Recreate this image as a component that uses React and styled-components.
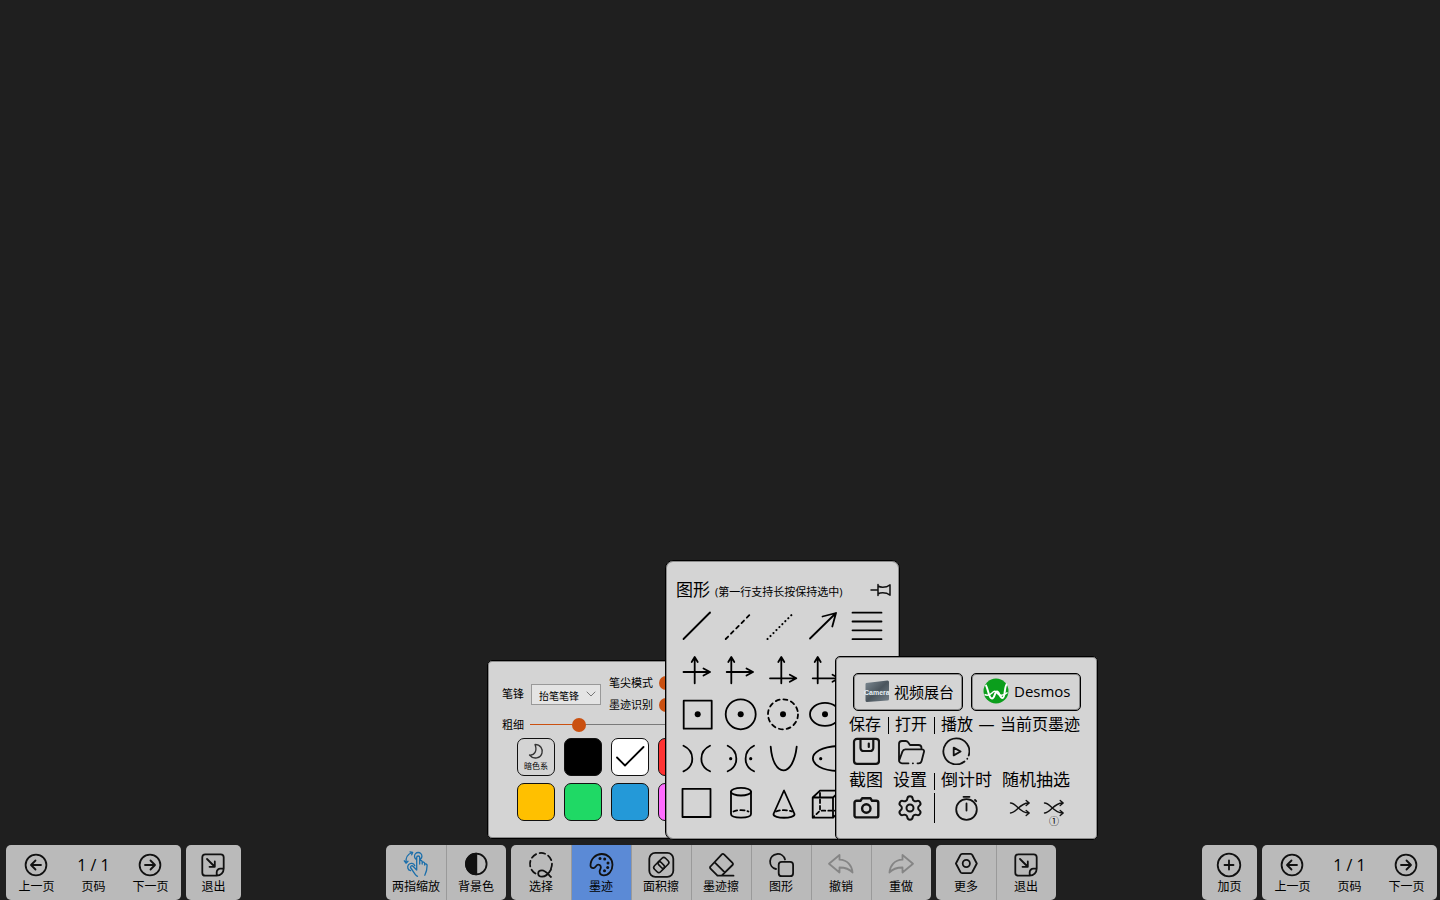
import React, { useState } from "react";
import styled, { createGlobalStyle } from "styled-components";
import { Settings } from "lucide-react";

const Global = createGlobalStyle`
  *, *::before, *::after { box-sizing: border-box; }
  body {
    margin: 0;
    background: #1f1f1f;
    color: #000;
    font-family: "Open Sans", "Noto Sans CJK SC", sans-serif;
  }
  button, select, input { font: inherit; color: inherit; }
`;

const Board = styled.main`
  min-height: 100vh;
  display: flex;
  flex-direction: column;
  justify-content: flex-end;
  overflow: hidden;
`;

const BottomBar = styled.footer`
  display: grid;
  grid-template-columns: 1fr auto 1fr;
  padding: 0 3px 0 5px;
`;

const Side = styled.div`
  display: flex;
  gap: 5px;
  padding-left: 1px;
  justify-content: ${(p) => p.$align};
`;

const Center = styled.div`
  position: relative;
  display: flex;
  gap: 5px;
`;

const Group = styled.nav`
  display: flex;
  height: 55px;
  padding: 0 ${(p) => p.$pad || 0}px;
  border-radius: 5px;
  background: #bababa;
  overflow: hidden;
`;

const ToolButton = styled.button`
  width: ${(p) => p.$width || 60}px;
  padding: 6px 0 0;
  border: 0;
  box-shadow: ${(p) => (p.$divided ? "inset 1px 0 #9a9a9a" : "none")};
  background: ${(p) => (p.$active ? "#5b8ad6" : "transparent")};
  display: flex;
  flex-direction: column;
  align-items: center;
  font-size: 12px;
  line-height: 16px;
  white-space: nowrap;
  cursor: pointer;
`;

const PageCount = styled.div`
  width: 57px;
  padding-top: 6px;
  display: flex;
  flex-direction: column;
  align-items: center;
  font-size: 12px;
  line-height: 16px;

  strong {
    font-size: 16px;
    font-weight: 400;
    line-height: 28px;
  }
`;

const Icon = styled.svg.attrs({ "aria-hidden": true })`
  display: block;
  flex: none;
  fill: none;
  stroke: ${(p) => p.$color || "#111"};
  stroke-width: ${(p) => p.$weight || 1.8};
  stroke-linecap: round;
  stroke-linejoin: round;
`;

const Popup = styled.section`
  position: absolute;
  left: ${(p) => p.$left}px;
  bottom: ${(p) => p.$bottom}px;
  width: ${(p) => p.$width}px;
  padding: ${(p) => p.$padding};
  border: 1px solid #000;
  border-radius: ${(p) => p.$radius || 5}px;
  background: #d4d4d4;
  box-shadow: inset 0 0 0 1px rgba(0, 0, 0, 0.35);
`;

/* Pen panel */
const PenOptions = styled.div`
  display: flex;
  align-items: center;
  height: 44px;
  font-size: 11px;
  line-height: 22px;
`;

const TipLabel = styled.label`
  width: 29px;
  flex: none;
`;

const SelectBox = styled.span`
  display: grid;
  align-items: center;
  width: 70px;
  margin-right: 8px;

  select, svg { grid-area: 1 / 1; }
  svg { justify-self: end; margin-right: 5px; pointer-events: none; }
`;

const TipSelect = styled.select`
  appearance: none;
  width: 100%;
  height: 21px;
  padding: 0 0 3px 7px;
  border: 1px solid #999;
  border-radius: 0;
  background: #e4e4e4;
  font-size: 10px;
`;

const ToggleRow = styled.label`
  display: flex;
  align-items: center;
  gap: 6px;
  height: 22px;
`;

const Toggle = styled.input.attrs({ type: "checkbox" })`
  appearance: none;
  width: 30px;
  height: 14px;
  margin: 0;
  border-radius: 7px;
  background: #ca5010;
`;

const WidthRow = styled.label`
  display: flex;
  align-items: center;
  height: 17px;
  font-size: 11px;
  line-height: 17px;
`;

const WidthText = styled.span`
  width: 28px;
  flex: none;
`;

const WidthSlider = styled.input.attrs({ type: "range" })`
  appearance: none;
  flex: 1;
  min-width: 0;
  height: 14px;
  margin: 0;
  background: linear-gradient(#ca5010, #ca5010) 0 50% / 49px 1px no-repeat,
    linear-gradient(#7a7a7a, #7a7a7a) 0 50% / 100% 1px no-repeat;

  &::-webkit-slider-thumb {
    appearance: none;
    width: 14px;
    height: 14px;
    border-radius: 50%;
    background: #ca5010;
  }
`;

const Swatches = styled.div`
  display: grid;
  grid-template-columns: repeat(6, 38px);
  gap: 7px 9px;
  margin: 5px 0 0 15px;
`;

const Swatch = styled.button`
  height: 38px;
  padding: 0;
  border: 1px solid #111;
  border-radius: 7px;
  background: ${(p) => p.$color};
  display: flex;
  flex-direction: column;
  align-items: center;
  justify-content: center;
  font-size: 8px;
  line-height: 10px;
`;

/* Shapes panel */
const ShapesHeader = styled.header`
  display: flex;
  align-items: center;
  height: 28px;

  h2 { margin: 0 5px 0 0; font-size: 17px; font-weight: 400; line-height: 28px; }
  small { font-size: 11px; line-height: 24px; padding-top: 4px; white-space: nowrap; }
`;

const PinButton = styled.button`
  margin-left: auto;
  padding: 0;
  border: 0;
  background: none;
`;

const ShapeGrid = styled.div`
  display: grid;
  grid-template-columns: repeat(5, 42px);
  grid-auto-rows: 44px;
`;

const PlainButton = styled.button`
  padding: 0;
  border: 0;
  background: none;
  cursor: pointer;
`;

/* More panel */
const AppRow = styled.div`
  display: flex;
  gap: 8px;
  padding-left: 4px;
`;

const AppButton = styled.button`
  display: flex;
  align-items: center;
  gap: 4px;
  width: 110px;
  height: 38px;
  padding: 0 0 2px 9px;
  border: 1px solid #000;
  border-radius: 5px;
  background: transparent;
  box-shadow: inset 0 0 0 1px rgba(0, 0, 0, 0.35);
  font-size: 15px;
  white-space: nowrap;
`;

const Caption = styled.div`
  display: flex;
  align-items: center;
  justify-content: ${(p) => (p.$spread ? "space-between" : "flex-start")};
  gap: ${(p) => (p.$spread ? 0 : 10)}px;
  width: 231px;
  height: ${(p) => p.$height}px;
  font-size: ${(p) => p.$size}px;
  line-height: ${(p) => p.$height}px;
  white-space: nowrap;
`;

const Bar = styled.i`
  display: inline-block;
  width: 1px;
  height: 17px;
  margin: 0 6px 0 7px;
  background: #000;
  vertical-align: middle;
`;

const TallBar = styled(Bar)`
  height: 30px;
  margin: 0 2px 0 -6px;
`;

const ActionRow = styled.div`
  display: flex;
  align-items: center;
  gap: ${(p) => p.$gap}px;
  height: 28px;
  padding-left: 3px;
`;

const Shuffles = styled.div`
  display: flex;
  gap: 6px;
  margin-left: 9px;
`;

const ShuffleButton = styled(PlainButton)`
  position: relative;

  span {
    position: absolute;
    left: 0;
    right: 0;
    top: 20px;
    font-size: 10px;
    line-height: 14px;
  }
`;

const glyphs = {
  prev: <><circle cx="14" cy="14" r="10.4" /><path d="M19 14H9.500M13.500 9.500L9 14l4.500 4.500" /></>,
  next: <><circle cx="14" cy="14" r="10.400" /><path d="M9 14h9.500M14.500 9.500L19 14l-4.500 4.500" /></>,
  add: <><circle cx="14" cy="14" r="11.300" /><path d="M14 9.500v9M9.500 14h9" /></>,
  exit: <><path d="M24.700 17.500V6.300a3 3 0 0 0-3-3H6.300a3 3 0 0 0-3 3v15.400a3 3 0 0 0 3 3h11.400l0-3.400a3.600 3.600 0 0 1 3.600-3.600h3.200M24.700 17.500c0 4-3 7.200-7 7.200M8 8l7.500 7.500M15.800 10.500v5.300h-5.300" /></>,
  gesture: <><path d="M4 12C3.500 7 6 3 10 1.500M8 .8l2.700.5-1 2.500M2.300 9.800L4 12.200l2-2M14.700 19V6.500a1.500 1.500 0 0 1 3 0V13M17.700 9.800c1.200-.9 2.500 0 2.500 1.200V13M20.200 11.300c1.200-.7 2.500.1 2.500 1.300V14M22.700 13c1.300-.5 2.400.3 2.400 1.600 0 4-.3 6-2.300 9.700M13.800 8A3.700 3.700 0 1 1 18.600 8M14.700 19L11 15.200c-1.400-1.200-3.200.4-2.200 1.800l4.400 6.300c.6.9 1.300 1.500 2.300 2M8.500 19.700a3.700 3.700 0 1 1 4.300-5" /></>,
  contrast: <><circle cx="14.300" cy="13" r="10.300" /><path d="M14.300 2.700a10.300 10.300 0 0 0 0 20.600z" fill="#111" /></>,
  select: <><path d="M8.500 22.500A11 11 0 1 1 24 17.500" strokeDasharray="5.500 3.600" /><path d="M24 18.500c-2.500 4.500-6 7.200-9 7.200-2.300 0-3.800-1.200-3.800-3.200S12.800 19.300 15 19.300c3.600 0 6 4 9 6.700" /></>,
  palette: <><path d="M3.500 14.500C3.500 8 8.500 3 14.800 3c6 0 10.700 5 10.700 10.800 0 6-4 10.500-8.700 10.500-4.300 0-5-3.500-3.500-6 1.300-2.300.2-4.600-2-4.600-2.300 0-2.300 3-4.600 3.300-2 .2-3.200-.8-3.200-2.500z" />{[[13, 7.500], [17.700, 8], [21, 12], [20.700, 16.500], [17.500, 19.800]].map(([x, y]) => <circle key={x} cx={x} cy={y} r="1.500" fill="#111" stroke="none" />)}</>,
  areaEraser: <><rect x="2.300" y="1.800" width="24" height="24" rx="6" /><g transform="rotate(-45 14.300 14)" strokeWidth="1.600"><rect x="6.500" y="9.700" width="9.500" height="8.600" rx="2.500" /><rect x="12.600" y="9.700" width="9.500" height="8.600" rx="2.500" /></g></>,
  inkEraser: <path d="M14.800 3.300a1.500 1.500 0 0 1 2.200 0l8.500 8.500a1.500 1.500 0 0 1 0 2.200L14.700 24.700H10.500l-7-7a1.500 1.500 0 0 1 0-2.200zM7.700 11.300l10 10M10.500 24.700h16" />,
  shapes: <><path d="M9 18A7.600 7.600 0 1 1 18 8.500" /><rect x="11.700" y="10.800" width="14.400" height="14.400" rx="3" /></>,
  redo: <path d="M2.500 21.500c.5-7 5-12.500 13-12.800V4l10.500 8.700-10.500 8.800v-5c-6 0-10 1.500-13 5z" />,
  undo: <path d="M25.500 21.500c-.5-7-5-12.500-13-12.800V4L2 12.700l10.500 8.800v-5c6 0 10 1.500 13 5z" />,
  more: <><path d="M3.900 12.500L8.400 4a2 2 0 0 1 1.800-1.200h8.300A2 2 0 0 1 20.300 4l4.500 8.500-4.500 8.500a2 2 0 0 1-1.800 1.200h-8.300A2 2 0 0 1 8.400 21z" /><circle cx="14.300" cy="12.500" r="3.600" /></>,
  save: <><rect x="2" y="1.800" width="25" height="25" rx="3" /><path d="M8.500 2v9a3 3 0 0 0 3 3h6.800a3 3 0 0 0 3-3V2M16.800 6.500v3.500" /></>,
  folder: <><path d="M6.500 26.300h-1.500A3 3 0 0 1 2 23.300V7a3 3 0 0 1 3-3h3.800c1 0 1.700.4 2.300 1.200L13 8h8.500A3 3 0 0 1 24.500 11v1.200M2 24l3.500-9.600A3 3 0 0 1 8.300 12.300H25a2 2 0 0 1 2 2.500L24.600 24a3 3 0 0 1-2.900 2.300h-1.200M6.500 26.300h5M15.800 26.300h.2" /></>,
  play: <><path d="M22.500 24.500A13 13 0 1 1 26.700 18.500M25.300 21.700v.1" /><path d="M11.700 10.600v7.800l6.900-3.900z" /></>,
  camera: <><path d="M4.500 6.800H8.500L10.200 4.200h8.200L20 6.800h4.300a2 2 0 0 1 2 2v12.600a2 2 0 0 1-2 2H4.500a2 2 0 0 1-2-2V8.800a2 2 0 0 1 2-2z" /><circle cx="14.300" cy="14.500" r="4.200" /></>,
  timer: <><circle cx="13.500" cy="15.500" r="10.300" /><path d="M10.500 2.800h6M13.500 9.500v7M22 6l1.200 1.200" /></>,
  shuffle: <path d="M4.500 9c6 0 9 10 18 10M4.500 19c6 0 9-10 18-10M20.200 6.500L23.200 9l-3 2.500M20.200 16.500l3 2.500-3 2.500" />,
};

function Glyph({ name, width = 28, ...rest }) {
  return <Icon width={width} height="28" viewBox={`0 0 ${width} 28`} {...rest}>{glyphs[name]}</Icon>;
}

function Tool({ icon, label, color, weight, ...rest }) {
  return (
    <ToolButton type="button" {...rest}>
      <Glyph name={icon} width={rest.$width ? 29 : 28} $color={color} $weight={weight} />
      {label}
    </ToolButton>
  );
}

function Pager() {
  return (
    <Group $pad={2} aria-label="翻页">
      <Tool icon="prev" label="上一页" $width={57} />
      <PageCount><strong>1 / 1</strong>页码</PageCount>
      <Tool icon="next" label="下一页" $width={57} />
    </Group>
  );
}

const Dot = ({ x, y, r = 3 }) => <circle cx={x} cy={y} r={r} fill="#000" stroke="none" />;

const axes = (x, y, x1, x2) => (
  <path d={`M${x} 35.300V9.500M${x - 3} 14L${x} 9l3 5M${x1} ${y}H${x2}M${x2 - 6.500} ${y - 3.500}L${x2} ${y}l-6.500 3.500`} />
);

const shapes = [
  ["直线", <path d="M7.500 35L34 8.500" />],
  ["虚线", <path d="M7.700 35L34 8.500" strokeDasharray="3.500 4" />],
  ["点线", <path d="M7.500 35L34 8.500" strokeDasharray=".1 4.100" strokeWidth="2.100" />],
  ["箭头", <path d="M8 34.500L34 9M20.500 12.500L34 9l-3.700 13.500" />],
  ["平行线", <path d="M8.500 8.700h29M8.500 17.500h29M8.500 26.300h29M8.500 35.200h29" />],
  ["坐标系一", axes(18.7, 24, 7.5, 34)],
  ["坐标系二", axes(13.3, 24, 8.7, 35)],
  ["坐标系三", axes(21.3, 30.3, 10, 36.3)],
  ["坐标系四", axes(15.7, 30.3, 10.7, 37)],
  ["三维坐标系", <path d="M21 9.500V25h15M21 25L10 36" />],
  ["中心矩形", <><path d="M7.700 8.700h28v28h-28z" /><Dot x={21.7} y={22.3} /></>],
  ["圆", <><circle cx="22.700" cy="22.300" r="15" /><Dot x={22.7} y={22.3} /></>],
  ["虚线圆", <><circle cx="23" cy="22.300" r="15" strokeDasharray="4 3.850" /><Dot x={23} y={22.3} /></>],
  ["椭圆", <><ellipse cx="23" cy="22.300" rx="15" ry="11.500" /><Dot x={23} y={22.3} /></>],
  ["焦点椭圆", <ellipse cx="23" cy="22.300" rx="14" ry="10" />],
  ["双曲线", <path d="M7.500 9.700c11.700 5.500 11.700 20.500 0 25.600M34 9.700c-11.500 5.500-11.500 20.500 0 25.600" />],
  ["焦点双曲线", <><path d="M9.700 9.700c11.500 5.500 11.500 20.500 0 25.600M36 9.700c-11.200 5.500-11.200 20.500 0 25.600" /><Dot x={12.7} y={22.7} r={1.6} /><Dot x={32.7} y={22.7} r={1.6} /></>],
  ["抛物线", <path d="M10.700 10.700c2.500 31.500 22.500 31.500 26 0" />],
  ["焦点抛物线", <><path d="M36 10C2.500 11.500 2.500 33.500 36 35" /><Dot x={18.7} y={22.7} r={1.6} /></>],
  ["横抛物线", <path d="M36 10C2.500 11.500 2.500 33.500 36 35" />],
  ["矩形", <path d="M6.500 8.800h28V37h-28z" />],
  ["圆柱", <><ellipse cx="23" cy="11.700" rx="10" ry="3.800" /><path d="M13 11.700V34c0 4.700 20 4.700 20 0V11.700" /><path d="M15.500 31.500c4-1.800 11-1.800 15 0" strokeDasharray="4 3" /></>],
  ["圆锥", <><path d="M24 10.500L13.500 34c-.5 5 21.500 5 21 0z" /><path d="M16 31.500c4-1.800 12-1.800 16 0" strokeDasharray="4 3" /></>],
  ["长方体", <><path d="M10.700 17.500H31v20.200H10.700zM10.700 17.500L18 10.700h20.500L31 17.500M38.500 10.700v20L31 37.700" /><path d="M18 13v17.700h20M17 31.700l-6 5.600" strokeDasharray="3.500 3" /></>],
  ["球", <circle cx="23" cy="22.300" r="14" />],
];

const colors = ["#000000", "#ffffff", "#ff3333", "#8a4fd0", "#ffc000", "#1fd965", "#2499d8", "#ff6cff", "#14b8a6", "#f97316"];

function PenPanel() {
  const [thickness, setThickness] = useState(42);
  return (
    <Popup $left={101} $bottom={61} $width={340} $padding="11px 14px 17px" aria-label="墨迹">
      <PenOptions>
        <TipLabel htmlFor="tip">笔锋</TipLabel>
        <SelectBox>
          <TipSelect id="tip"><option>抬笔笔锋</option></TipSelect>
          <Icon width="10" height="6" viewBox="0 0 10 6" $color="#777" $weight={1}><path d="M1 1l4 4 4-4" /></Icon>
        </SelectBox>
        <div>
          <ToggleRow>笔尖模式<Toggle defaultChecked /></ToggleRow>
          <ToggleRow>墨迹识别<Toggle defaultChecked /></ToggleRow>
        </div>
      </PenOptions>
      <WidthRow>
        <WidthText>粗细</WidthText>
        <WidthSlider min="0" max="268" value={thickness} onChange={(e) => setThickness(+e.target.value)} />
      </WidthRow>
      <Swatches>
        <Swatch type="button" $color="transparent">
          <Icon width="18" height="18" viewBox="0 0 18 18" $weight={1.3} $color="#333">
            <path d="M8 1.500c5.500 0 8 4.500 7 8.500-1.200 5.200-8.500 7-12.500 2 5 .5 8-4 5.500-10.500z" />
          </Icon>
          暗色系
        </Swatch>
        {colors.map((color, i) => (
          <React.Fragment key={color}>
            <Swatch type="button" $color={color} aria-label={color} aria-pressed={color === "#ffffff"}
              style={i === 4 ? { gridColumn: 1 } : undefined}>
              {color === "#ffffff" && (
                <Icon width="36" height="36" viewBox="0 0 36 36" $color="#000"><path d="M5 18.500l8 8L31.500 8" /></Icon>
              )}
            </Swatch>
          </React.Fragment>
        ))}
      </Swatches>
    </Popup>
  );
}

function ShapesPanel() {
  return (
    <Popup $left={279} $bottom={60} $width={235} $radius={8} $padding="15px 7px 15px 10px" aria-label="图形">
      <ShapesHeader>
        <h2>图形</h2>
        <small>(第一行支持长按保持选中)</small>
        <PinButton type="button" aria-label="固定">
          <Icon width="22" height="14" viewBox="0 0 22 14" $weight={1.500}>
            <path d="M1 7h7M8 1.500v11M8 3c2 1.300 6 1.300 8.500.8L20 1.800v10.400l-3.500-2c-2.500-.5-6.500-.5-8.500.8" />
          </Icon>
        </PinButton>
      </ShapesHeader>
      <ShapeGrid>
        {shapes.map(([name, drawing]) => (
          <PlainButton key={name} type="button" aria-label={name}>
            <Icon width="42" height="44" viewBox="0 0 42 44" $color="#000">{drawing}</Icon>
          </PlainButton>
        ))}
      </ShapeGrid>
    </Popup>
  );
}

function MorePanel() {
  return (
    <Popup $left={449} $bottom={60} $width={263} $padding="16px 13px 17px" aria-label="更多">
      <AppRow>
        <AppButton type="button">
          <svg width="27" height="26" viewBox="0 0 27 26" aria-hidden="true">
            <defs>
              <linearGradient id="body" x1="0" y1="0" x2="1" y2="1">
                <stop offset="0" stopColor="#7d8a93" />
                <stop offset=".5" stopColor="#4b555d" />
                <stop offset="1" stopColor="#76828b" />
              </linearGradient>
            </defs>
            <path d="M3 5l21.500-2.500q1.500 0 1.500 1.500v17q0 1.500-1.500 1.500L4 24q-1.500 0-1.500-1.500V6z" fill="url(#body)" />
            <text x="1" y="17" fontSize="7" fontWeight="700" fontFamily="Liberation Sans, sans-serif" fill="#e8f0f6">Camera</text>
          </svg>
          视频展台
        </AppButton>
        <AppButton type="button">
          <svg width="29" height="26" viewBox="0 0 29 26" aria-hidden="true">
            <circle cx="15" cy="13" r="12.500" fill="#0b9e1c" />
            <path d="M4.500 7C7 9 7.500 20.500 11 20.500c3 0 2.500-7 5-7s2.500 6.500 5.500 6.500S23 8 26 6" fill="none" stroke="#fff" strokeWidth="2" />
            <path d="M3.500 16.500c3 1.500 5 1 7.500-1.500s3.500-2 5 0 5 4 10.500-.5" fill="none" stroke="#fff" strokeWidth="1.500" />
          </svg>
          Desmos
        </AppButton>
      </AppRow>
      <Caption $spread $size={16} $height={26}>
        <span>保存<Bar />打开<Bar />播放</span><span>—</span><span>当前页墨迹</span>
      </Caption>
      <ActionRow $gap={17}>
        <PlainButton type="button" aria-label="保存"><Glyph name="save" $weight={2.2} /></PlainButton>
        <PlainButton type="button" aria-label="打开"><Glyph name="folder" /></PlainButton>
        <PlainButton type="button" aria-label="播放"><Glyph name="play" /></PlainButton>
      </ActionRow>
      <Caption $size={17} $height={29}>
        <span>截图</span><span>设置<Bar />倒计时</span><span>随机抽选</span>
      </Caption>
      <ActionRow $gap={16}>
        <PlainButton type="button" aria-label="截图"><Glyph name="camera" $weight={2.4} /></PlainButton>
        <PlainButton type="button" aria-label="设置"><Settings size={28} strokeWidth={1.7} color="#111" style={{ display: "block" }} /></PlainButton>
        <TallBar />
        <PlainButton type="button" aria-label="倒计时"><Glyph name="timer" /></PlainButton>
        <Shuffles>
          <ShuffleButton type="button" aria-label="随机抽选"><Glyph name="shuffle" $weight={1.4} /></ShuffleButton>
          <ShuffleButton type="button" aria-label="单人抽选"><Glyph name="shuffle" $weight={1.4} /><span>①</span></ShuffleButton>
        </Shuffles>
      </ActionRow>
    </Popup>
  );
}

export default function App() {
  return (
    <>
      <Global />
      <Board>
        <BottomBar>
          <Side $align="flex-start">
            <Pager />
            <Group><Tool icon="exit" label="退出" $width={55} /></Group>
          </Side>
          <Center>
            <PenPanel />
            <ShapesPanel />
            <MorePanel />
            <Group>
              <Tool icon="gesture" label="两指缩放" color="#1c6fab" weight={1.3} />
              <Tool icon="contrast" label="背景色" $divided />
            </Group>
            <Group>
              <Tool icon="select" label="选择" />
              <Tool icon="palette" label="墨迹" $active $divided />
              <Tool icon="areaEraser" label="面积擦" $divided />
              <Tool icon="inkEraser" label="墨迹擦" $divided />
              <Tool icon="shapes" label="图形" $divided />
              <Tool icon="undo" label="撤销" color="#858585" $divided />
              <Tool icon="redo" label="重做" color="#858585" $divided />
            </Group>
            <Group>
              <Tool icon="more" label="更多" />
              <Tool icon="exit" label="退出" $divided />
            </Group>
          </Center>
          <Side $align="flex-end">
            <Group><Tool icon="add" label="加页" $width={55} /></Group>
            <Pager />
          </Side>
        </BottomBar>
      </Board>
    </>
  );
}
